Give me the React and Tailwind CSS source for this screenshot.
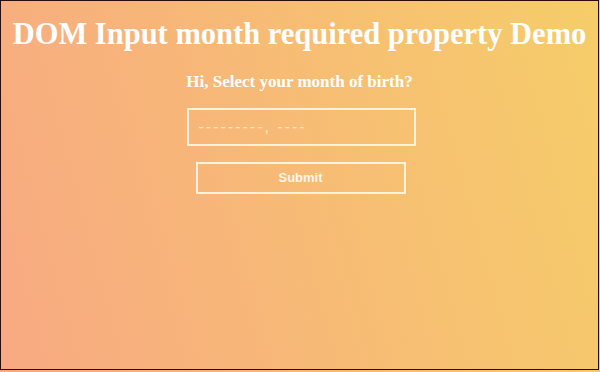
import React from 'react';

export default function App() {
  return (
    <div className="w-[600px] h-[372px] bg-[linear-gradient(75deg,#f8a982,#f6cd69)]">
      <div className="h-[370px] w-[599px] border border-[#2a0d08] flex flex-col items-center font-['Liberation_Serif',serif] text-white">
        <h1 className="mt-[15px] text-[30.5px] leading-[36px] font-bold whitespace-nowrap">DOM Input month required property Demo</h1>
        <p className="mt-[20px] text-[17px] leading-[20px] font-bold">Hi, Select your month of birth?</p>
        <div className="mt-[16px] ml-[3px] w-[229px] h-[38px] border-2 border-[#fdf3dc] flex items-center px-[10px] font-['Liberation_Sans',sans-serif] text-[16px] text-[#fbe6c2] tracking-[2px]">
          ---------, ----
        </div>
        <button className="mt-[16px] ml-[2px] w-[210px] h-[32px] border-2 border-[#fdf3dc] font-['Liberation_Sans',sans-serif] text-[13px] font-bold text-[#fdf6e6]">
          Submit
        </button>
      </div>
    </div>
  );
}
